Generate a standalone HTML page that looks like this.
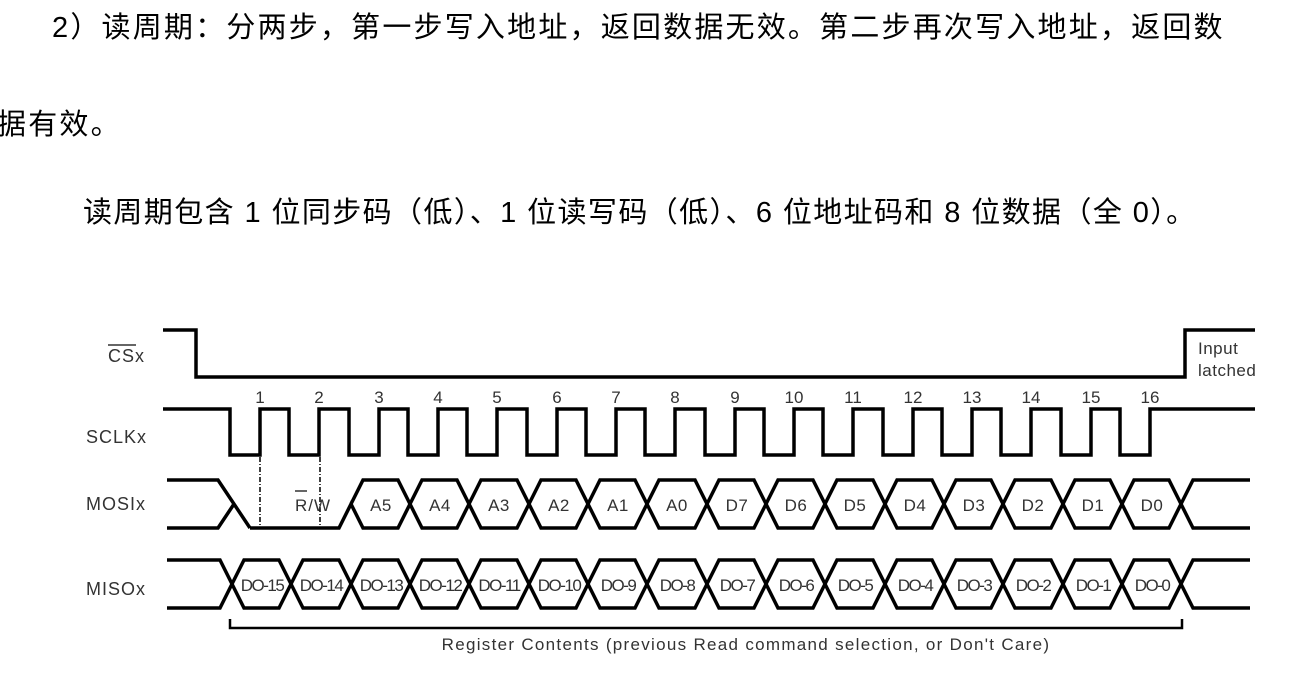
<!DOCTYPE html>
<html><head><meta charset="utf-8"><style>
body{margin:0;width:1313px;height:675px;background:#fff;overflow:hidden;position:relative}
.t{position:absolute;white-space:nowrap;font-family:"Liberation Sans","Noto Sans CJK SC",sans-serif;font-size:29px;color:#000;letter-spacing:2.2px;line-height:40px}
svg{position:absolute;left:0;top:0}
svg text{font-family:"Liberation Sans",Arial,sans-serif;fill:#333}
</style></head><body>
<div class="t" style="left:52px;top:8px">2）读周期：分两步，第一步写入地址，返回数据无效。第二步再次写入地址，返回数</div>
<div class="t" style="left:-3px;top:105px">据有效。</div>
<div class="t" style="left:83px;top:193px;letter-spacing:1.4px">读周期包含 1 位同步码（低）、1 位读写码（低）、6 位地址码和 8 位数据（全 0）。</div>
<svg width="1313" height="675" viewBox="0 0 1313 675">
<g fill="none" stroke="#000" stroke-width="3.5">
<path d="M163 330 H196 V377 H1185 V330 H1255"/>
<path d="M163 409 H230 V455 H260 V409 H289 V455 H319 V409 H349 V455 H379 V409 H408 V455 H438 V409 H467 V455 H497 V409 H527 V455 H557 V409 H586 V455 H616 V409 H645 V455 H675 V409 H705 V455 H735 V409 H764 V455 H794 V409 H823 V455 H853 V409 H883 V455 H913 V409 H942 V455 H972 V409 H1001 V455 H1031 V409 H1061 V455 H1091 V409 H1120 V455 H1150 V409 H1255"/>
<path d="M167 480 H218 L250 528 M167 528 H218 L234 504"/>
<path d="M351 504 L363 480 H398 L410 504 L422 480 H457 L469 504 L481 480 H517 L529 504 L541 480 H576 L588 504 L600 480 H635 L647 504 L659 480 H695 L707 504 L719 480 H754 L766 504 L778 480 H813 L825 504 L837 480 H873 L885 504 L897 480 H932 L944 504 L956 480 H991 L1003 504 L1015 480 H1051 L1063 504 L1075 480 H1110 L1122 504 L1134 480 H1169 L1181 504 L1193 480 H1250"/>
<path d="M250 528 H339 L351 504 L363 528 H398 L410 504 L422 528 H457 L469 504 L481 528 H517 L529 504 L541 528 H576 L588 504 L600 528 H635 L647 504 L659 528 H695 L707 504 L719 528 H754 L766 504 L778 528 H813 L825 504 L837 528 H873 L885 504 L897 528 H932 L944 504 L956 528 H991 L1003 504 L1015 528 H1051 L1063 504 L1075 528 H1110 L1122 504 L1134 528 H1169 L1181 504 L1193 528 H1250"/>
<path d="M167 560 H220 L232 584 L244 560 H279 L291 584 L303 560 H339 L351 584 L363 560 H398 L410 584 L422 560 H457 L469 584 L481 560 H517 L529 584 L541 560 H576 L588 584 L600 560 H635 L647 584 L659 560 H695 L707 584 L719 560 H754 L766 584 L778 560 H813 L825 584 L837 560 H873 L885 584 L897 560 H932 L944 584 L956 560 H991 L1003 584 L1015 560 H1051 L1063 584 L1075 560 H1110 L1122 584 L1134 560 H1169 L1181 584 L1193 560 H1250"/>
<path d="M167 608 H220 L232 584 L244 608 H279 L291 584 L303 608 H339 L351 584 L363 608 H398 L410 584 L422 608 H457 L469 584 L481 608 H517 L529 584 L541 608 H576 L588 584 L600 608 H635 L647 584 L659 608 H695 L707 584 L719 608 H754 L766 584 L778 608 H813 L825 584 L837 608 H873 L885 584 L897 608 H932 L944 584 L956 608 H991 L1003 584 L1015 608 H1051 L1063 584 L1075 608 H1110 L1122 584 L1134 608 H1169 L1181 584 L1193 608 H1250"/>
<path d="M230 619 V628 H1182 V619" stroke-width="2.5"/>
<path d="M260 457 V528 M320 457 V528" stroke-width="1.5" stroke-dasharray="5 2 1 2"/>
</g>
<g font-size="18" letter-spacing="1">
<text x="108" y="362">CSx</text>
<line x1="108" y1="345" x2="136" y2="345" stroke="#333" stroke-width="1.5"/>
<text x="86" y="443">SCLKx</text>
<text x="86" y="510">MOSIx</text>
<text x="86" y="595">MISOx</text>
<text x="1198" y="354" font-size="17" letter-spacing="0.5">Input</text>
<text x="1198" y="376" font-size="17" letter-spacing="0.5">latched</text>
</g>
<text x="295" y="511" font-size="17" letter-spacing="1">R/W</text>
<line x1="295" y1="491" x2="307" y2="491" stroke="#333" stroke-width="1.5"/>
<g font-size="17" text-anchor="middle">
<text x="260" y="403">1</text><text x="319" y="403">2</text><text x="379" y="403">3</text><text x="438" y="403">4</text><text x="497" y="403">5</text><text x="557" y="403">6</text><text x="616" y="403">7</text><text x="675" y="403">8</text><text x="735" y="403">9</text><text x="794" y="403">10</text><text x="853" y="403">11</text><text x="913" y="403">12</text><text x="972" y="403">13</text><text x="1031" y="403">14</text><text x="1091" y="403">15</text><text x="1150" y="403">16</text>
<g letter-spacing="0.5">
<text x="381" y="511">A5</text><text x="440" y="511">A4</text><text x="499" y="511">A3</text><text x="559" y="511">A2</text><text x="618" y="511">A1</text><text x="677" y="511">A0</text><text x="737" y="511">D7</text><text x="796" y="511">D6</text><text x="855" y="511">D5</text><text x="915" y="511">D4</text><text x="974" y="511">D3</text><text x="1033" y="511">D2</text><text x="1093" y="511">D1</text><text x="1152" y="511">D0</text>
</g>
<g letter-spacing="-1.5">
<text x="262" y="591">DO-15</text><text x="321" y="591">DO-14</text><text x="381" y="591">DO-13</text><text x="440" y="591">DO-12</text><text x="499" y="591">DO-11</text><text x="559" y="591">DO-10</text><text x="618" y="591">DO-9</text><text x="677" y="591">DO-8</text><text x="737" y="591">DO-7</text><text x="796" y="591">DO-6</text><text x="855" y="591">DO-5</text><text x="915" y="591">DO-4</text><text x="974" y="591">DO-3</text><text x="1033" y="591">DO-2</text><text x="1093" y="591">DO-1</text><text x="1152" y="591">DO-0</text>
</g>
<text x="746" y="650" letter-spacing="1.3">Register Contents (previous Read command selection, or Don't Care)</text>
</g>
</svg>
</body></html>
